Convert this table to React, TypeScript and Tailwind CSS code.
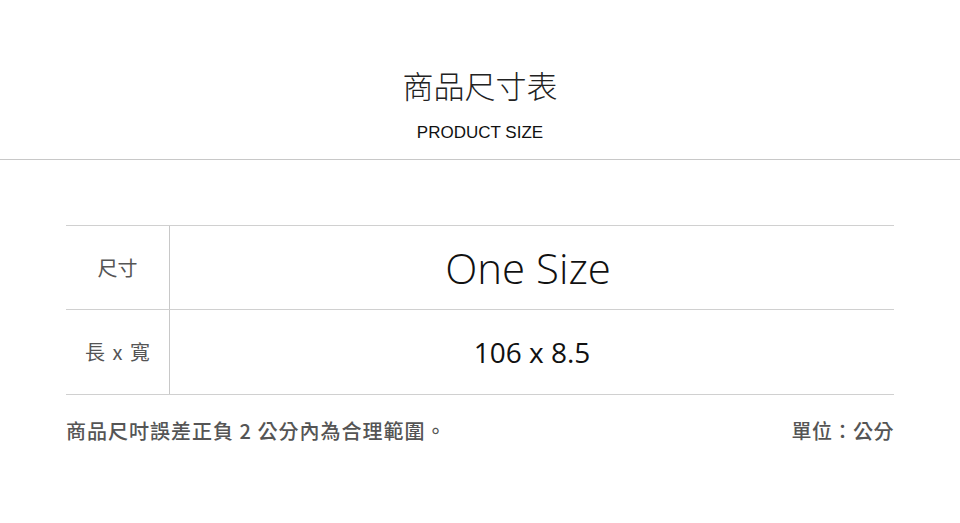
import React from 'react';

const cjk = { fontFamily: '"Noto Sans CJK TC", "Noto Sans", sans-serif' };
const latin = { fontFamily: '"Open Sans", "Noto Sans CJK TC", sans-serif' };

const rows = [
  { label: '長 x 寬', value: '106 x 8.5' },
];

export default function App() {
  return (
    <div className="w-[960px] h-[523px] bg-white overflow-hidden">
      {/* 標題 */}
      <div className="flex flex-col items-center pt-[65px] pb-[16px] border-b border-[#c8c8c8]">
        <h1 className="text-[31px] leading-[40px] font-light text-[#222]" style={cjk}>商品尺寸表</h1>
        <p className="mt-[18px] text-[17px] leading-[20px] text-[#111]" style={{ fontFamily: '"Liberation Sans", Arial, sans-serif' }}>
          PRODUCT SIZE
        </p>
      </div>

      {/* 表格 */}
      <div className="mx-[66px] mt-[65px]">
        <div className="border-t border-b border-[#d0d0d0]">
          <div className="flex h-[84px] border-b border-[#d0d0d0]">
            <div className="w-[104px] shrink-0 flex items-center justify-center border-r border-[#c8c8c8] text-[20px] text-[#555]" style={cjk}>
              尺寸
            </div>
            <div className="flex-1 flex items-center justify-center pr-[8px] text-[42px] font-light text-[#111]" style={latin}>
              One Size
            </div>
          </div>
          {rows.map((r) => (
            <div key={r.label} className="flex h-[84px]">
              <div className="w-[104px] shrink-0 flex items-center justify-center border-r border-[#c8c8c8] text-[20px] text-[#555] [word-spacing:3px]" style={cjk}>
                {r.label}
              </div>
              <div className="flex-1 flex items-center justify-center text-[28px] text-[#111]" style={latin}>
                {r.value}
              </div>
            </div>
          ))}
        </div>

        {/* 備註 */}
        <div className="flex justify-between items-center mt-[21px] text-[20px] font-medium text-[#555]" style={cjk}>
          <span className="tracking-[1px]">商品尺吋誤差正負 2 公分內為合理範圍。</span>
          <span className="tracking-[0.5px]">單位：公分</span>
        </div>
      </div>
    </div>
  );
}
